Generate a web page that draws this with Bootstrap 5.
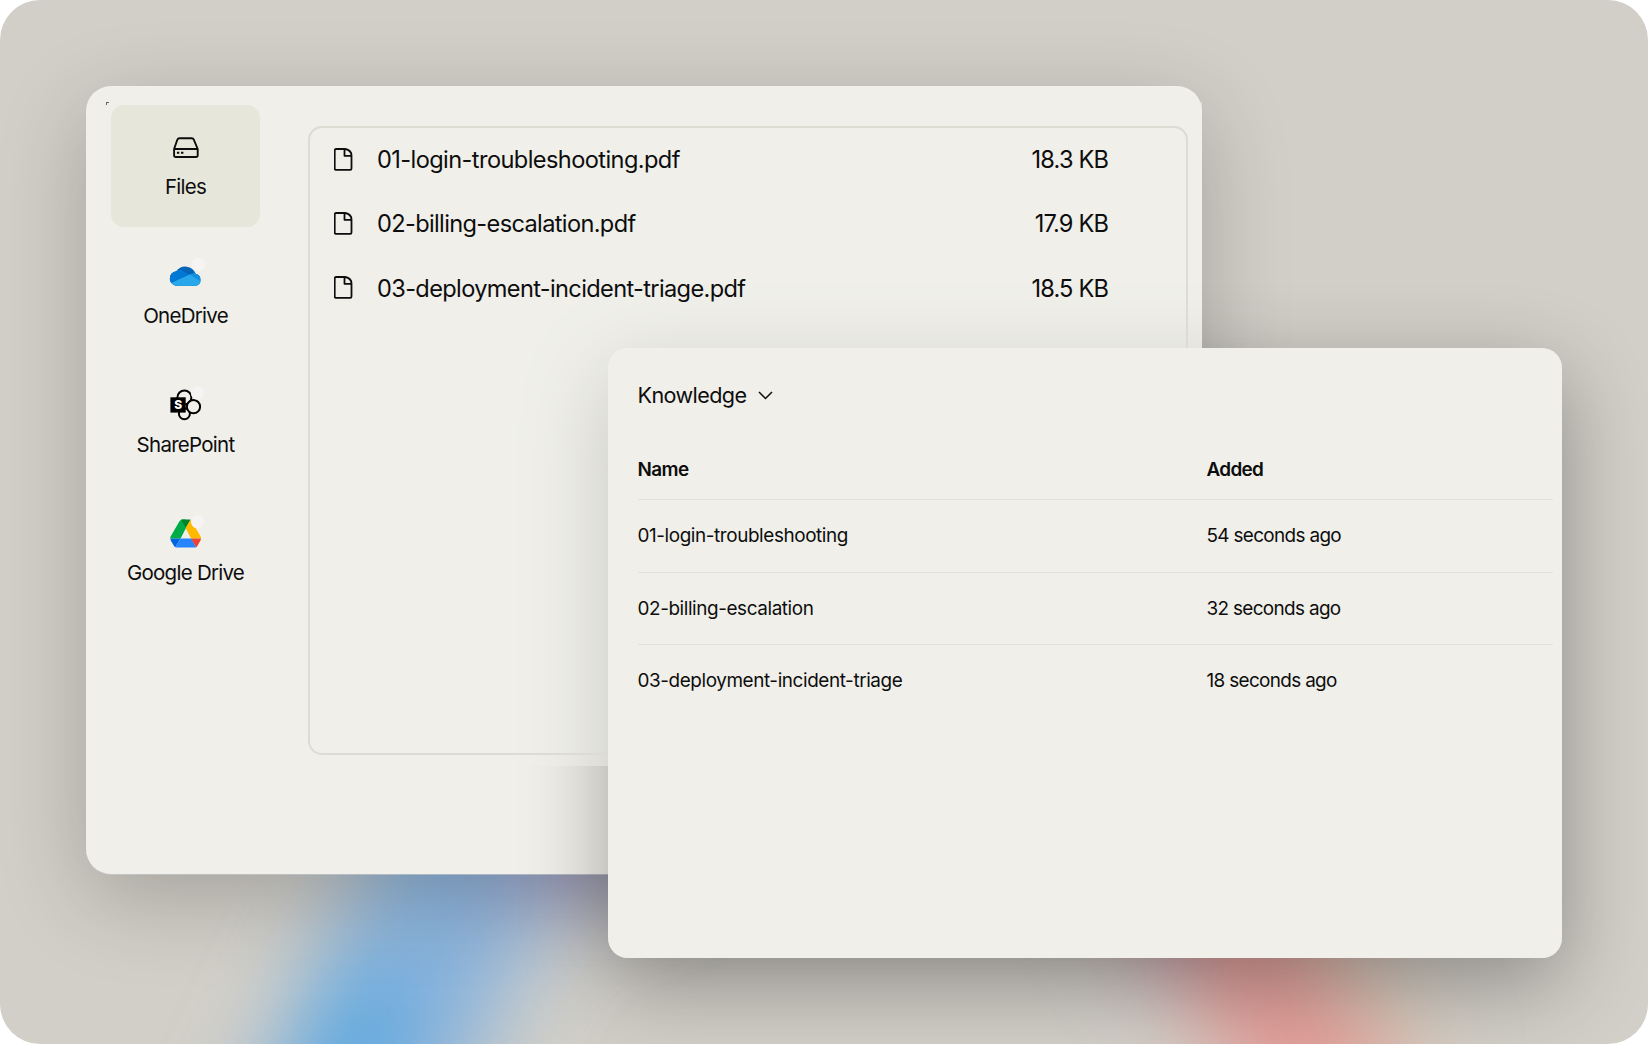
<!DOCTYPE html>
<html lang="en">
<head>
<meta charset="utf-8">
<title>Knowledge files</title>
<link href="https://cdn.jsdelivr.net/npm/bootstrap@5.3.0/dist/css/bootstrap.min.css" rel="stylesheet">
<style>
body{font-family:Inter,"Liberation Sans",sans-serif;color:#0d0d0d;background:#fff}
.desk{width:1648px;height:1044px;border-radius:40px;background:#d2cfc8}
.backdrop-art{inset:0}
.win-back{left:86px;top:86px;width:1116px;height:788px;border-radius:25px;background:#f0efea;box-shadow:0 1px 0 rgba(200,205,210,.6),0 24px 88px rgba(0,0,0,.22)}
.win-shadow{left:608px;top:348px;width:954px;height:610px;border-radius:20px;box-shadow:0 26px 86px rgba(0,0,0,.33)}
.win-content{left:107px;top:102px;width:1095px;height:664px;background:rgba(240,239,234,.5);padding:3px 14px 0 4px}
.win-content::before{content:"";position:absolute;left:-1px;top:0;width:3px;height:3px;border:solid #66665f;border-width:1px 0 0 1px}
.win-front{left:608px;top:348px;width:954px;height:610px;border-radius:20px;background:#f0efea;padding:29px 9px 0 29.5px}
.sources{width:149px;gap:6.8px}
.source{height:122px;border-radius:13px;padding-top:20px;font-size:20.5px;letter-spacing:-.036em}
.source.on{background:#e7e6da}
.source span{margin-top:8px;line-height:28px}
.files{margin:21px 0 0 48px;width:880px;height:629px;border:2px solid #dddcd2;border-radius:14px}
.file-row{height:64.4px;padding:0 78px 1px 24px;font-size:23.6px;letter-spacing:-.0275em}
.file-row:first-child span:first-of-type{letter-spacing:-.025em}
.file-row .ms-auto{letter-spacing:-.036em}
.file-row svg{margin-right:23px}
.know{font-size:21.6px;line-height:36px;letter-spacing:-.028em}
.know-table{margin-top:27px;font-size:18.9px;letter-spacing:-.0213em}
.trow{height:72.5px;border-top:1.5px solid #e2e1dc;padding-top:1px}
.trow>:last-child{letter-spacing:-.0345em}
.thead-row{height:59px;border:0;font-weight:600;letter-spacing:-.0315em}
.trow>:first-child{width:569px}
</style>
</head>
<body>
<main class="desk position-relative overflow-hidden">
<svg class="backdrop-art position-absolute" width="1648" height="1044" viewBox="0 0 1648 1044">
<defs>
<filter id="soft" x="-50%" y="-50%" width="200%" height="200%"><feGaussianBlur stdDeviation="44"/></filter>
</defs>
<g filter="url(#soft)" fill="none">
<path d="M530 800L450 900L310 1200" stroke="#8bb4dc" stroke-width="185"/>
<path d="M380 970L310 1180" stroke="#58a8e0" stroke-width="95"/>
<path d="M500 850L650 830" stroke="#a4a3c8" stroke-width="115"/>
<path d="M1175 840L1385 1200" stroke="#e39c97" stroke-width="135"/>
<path d="M1120 870L1190 970" stroke="#cdaabb" stroke-width="50"/>
<path d="M1330 930L1420 1080" stroke="#dac4b0" stroke-width="40"/>
</g>
</svg>
<div class="win-back position-absolute"></div>
<div class="win-shadow position-absolute"></div>
<section class="win-content position-absolute d-flex align-items-start">
<nav class="sources d-flex flex-column flex-shrink-0">
<div class="source on d-flex flex-column align-items-center">
<svg width="44" height="40" viewBox="163.900 125 44 40" fill="none" stroke="#0d0d0d" stroke-width="1.900" stroke-linejoin="round"><path d="M174 149L177.200 139.800Q177.800 138.300 179.400 138.300H191.600Q193.200 138.300 193.800 139.800L197.600 149V155.200Q197.600 157 195.800 157H175.800Q174 157 174 155.200ZM174 149H197.600"/><path d="M176.800 152.700h2.400m1.700 0h2.400"/></svg>
<span>Files</span></div>
<div class="source d-flex flex-column align-items-center">
<svg width="44" height="40" viewBox="163.200 254.300 44 40"><clipPath id="cl"><path d="M177 286a7 7 0 0 1-1.500-14.500 11 11 0 0 1 19.300 2.500 6.200 6.200 0 0 1 .6 12Z"/></clipPath><g clip-path="url(#cl)"><path fill="#0364b8" d="M168 262h36v26h-36z"/><path fill="#0078d4" d="M168 269.500h8q4 0 8 2.700l9 5.300-24 12z"/><path fill="#1490df" d="M188 275l6-2h10v16h-10z"/><path fill="#28a8ea" d="M168 284.500L189 274.800 203 284v4h-35z"/></g><circle cx="197.500" cy="264.800" r="6.700" fill="#f5f4f2"/></svg>
<span>OneDrive</span></div>
<div class="source d-flex flex-column align-items-center">
<svg width="44" height="40" viewBox="163.900 383.300 44 40"><g fill="none" stroke="#000" stroke-width="2"><circle cx="184.300" cy="397.700" r="7"/><circle cx="184.300" cy="414" r="5.500"/><circle cx="193.400" cy="407" r="6.600" fill="#f0efea"/></g><path d="M170.300 397.600h15.300v15.300h-15.300z"/><text x="178" y="409.600" text-anchor="middle" font-size="12" font-weight="800" letter-spacing="0" fill="#fff">S</text><circle cx="197.500" cy="393.300" r="6.700" fill="#f5f4f2"/></svg>
<span>SharePoint</span></div>
<div class="source d-flex flex-column align-items-center">
<svg width="44" height="40" viewBox="163.900 511.400 44 40"><path fill="#00ac47" d="M181.500 520h4.200l.2 8.500L180.500 539h-10.300q-.3-1 .3-2l9-15.500z"/><path fill="#00832d" d="M181 520.200q.8-.4 1.500-.4h7l1 .4-4.700 8.200z"/><path fill="#ffba00" d="M190.300 520.100q.8.400 1.200 1.200l9 15.600q.5 1 .4 2.100h-9.900l-5.500-10.600z"/><path fill="#0066da" d="M170.200 539h10.300l-5.300 8.700q-.8-.5-1.200-1.200l-3.200-5.300z"/><path fill="#2684fc" d="M180.500 539h10.700l5 8.700q-.8.300-1.500.3h-18l-1.500-.3z"/><path fill="#ea4335" d="M191 539h9.900q0 1-.6 2l-3 5.500q-.5.800-1.200 1.200z"/><circle cx="197.500" cy="522.200" r="6.700" fill="#f5f4f2"/></svg>
<span>Google Drive</span></div>
</nav>
<div class="files flex-shrink-0">
<div class="file-row d-flex align-items-center"><svg width="20" height="26" viewBox="0.500 0.500 20 26" fill="none" stroke="#0d0d0d" stroke-width="1.800" stroke-linejoin="round"><path d="M2.500 2.500H11.700Q18 3.500 18 9.300V22a1.300 1.300 0 0 1-1.300 1.300H2.500A1.300 1.300 0 0 1 1.200 22V3.800A1.300 1.300 0 0 1 2.500 2.500ZM11 2.500V9.300H18"/></svg><span>01-login-troubleshooting.pdf</span><span class="ms-auto">18.3 KB</span></div>
<div class="file-row d-flex align-items-center"><svg width="20" height="26" viewBox="0.500 0.500 20 26" fill="none" stroke="#0d0d0d" stroke-width="1.800" stroke-linejoin="round"><path d="M2.500 2.500H11.700Q18 3.500 18 9.300V22a1.300 1.300 0 0 1-1.300 1.300H2.500A1.300 1.300 0 0 1 1.200 22V3.800A1.300 1.300 0 0 1 2.500 2.500ZM11 2.500V9.300H18"/></svg><span>02-billing-escalation.pdf</span><span class="ms-auto">17.9 KB</span></div>
<div class="file-row d-flex align-items-center"><svg width="20" height="26" viewBox="0.500 0.500 20 26" fill="none" stroke="#0d0d0d" stroke-width="1.800" stroke-linejoin="round"><path d="M2.500 2.500H11.700Q18 3.500 18 9.300V22a1.300 1.300 0 0 1-1.300 1.300H2.500A1.300 1.300 0 0 1 1.200 22V3.800A1.300 1.300 0 0 1 2.500 2.500ZM11 2.500V9.300H18"/></svg><span>03-deployment-incident-triage.pdf</span><span class="ms-auto">18.5 KB</span></div>
</div>
</section>
<section class="win-front position-absolute">
<div class="know d-flex align-items-center"><span>Knowledge</span><svg class="ms-2" width="22" height="20" viewBox="0 0 22 20" fill="none" stroke="#0d0d0d" stroke-width="1.500"><path d="M5 7L11.500 13.500l6.500-6.500"/></svg></div>
<div class="know-table">
<div class="trow thead-row d-flex align-items-center"><span>Name</span><span>Added</span></div>
<div class="trow d-flex align-items-center"><span>01-login-troubleshooting</span><span>54 seconds ago</span></div>
<div class="trow d-flex align-items-center"><span>02-billing-escalation</span><span>32 seconds ago</span></div>
<div class="trow d-flex align-items-center"><span>03-deployment-incident-triage</span><span>18 seconds ago</span></div>
</div>
</section>
</main>
<script src="https://cdn.jsdelivr.net/npm/bootstrap@5.3.0/dist/js/bootstrap.bundle.min.js"></script>
</body>
</html>
